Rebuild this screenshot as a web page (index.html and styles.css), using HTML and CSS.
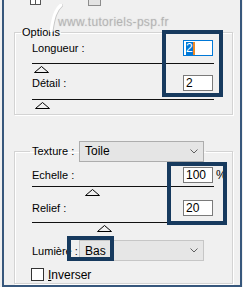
FILE: index.html
```html
<!DOCTYPE html>
<html lang="fr">
<head>
  <meta charset="UTF-8">
  <title>Options</title>
  <link rel="stylesheet" href="styles.css">
</head>
<body>

  <div class="window">
    <!-- reste de la barre du haut -->
    <div class="top">
      <span class="mini mini-a"></span>
      <span class="mini mini-b"></span>
    </div>

    <!-- Options -->
    <fieldset class="group options">
      <legend>Options</legend>
      <div class="row">
        <span class="label">Longueur :</span>
        <span class="num focus"><span class="sel">2</span><span class="caret"></span></span>
        <span class="unit"></span>
      </div>
      <div class="slider">
        <svg class="thumb" style="margin-left:2px" width="15" height="7" viewBox="0 0 15 7"><polygon points="0.5,6.5 7.5,0.5 14.5,6.5"/></svg>
      </div>
      <div class="row second">
        <span class="label">Détail :</span>
        <span class="num">2</span>
        <span class="unit"></span>
      </div>
      <div class="slider last">
        <svg class="thumb" style="margin-left:3px" width="15" height="7" viewBox="0 0 15 7"><polygon points="0.5,6.5 7.5,0.5 14.5,6.5"/></svg>
      </div>
    </fieldset>

    <!-- Texture -->
    <fieldset class="group texture">
      <legend>
        <span class="legend-label">Texture :</span><span class="combo">Toile<svg class="chevron" width="8" height="5" viewBox="0 0 8 5"><polyline points="0.5,0.5 4,4 7.5,0.5"/></svg></span>
      </legend>
      <div class="row echelle">
        <span class="label">Echelle :</span>
        <span class="num">100</span>
        <span class="unit">%</span>
      </div>
      <div class="slider">
        <svg class="thumb" style="margin-left:53px" width="15" height="7" viewBox="0 0 15 7"><polygon points="0.5,6.5 7.5,0.5 14.5,6.5"/></svg>
      </div>
      <div class="row relief">
        <span class="label">Relief :</span>
        <span class="num">20</span>
        <span class="unit"></span>
      </div>
      <div class="slider">
        <svg class="thumb" style="margin-left:65px" width="15" height="7" viewBox="0 0 15 7"><polygon points="0.5,6.5 7.5,0.5 14.5,6.5"/></svg>
      </div>
      <div class="combo-row">
        <span class="legend-label wide">Lumière :</span><span class="combo off">Bas<svg class="chevron" width="8" height="5" viewBox="0 0 8 5"><polyline points="0.5,0.5 4,4 7.5,0.5"/></svg></span>
      </div>
      <label class="check">
        <span class="box"></span><span><u>I</u>nverser</span>
      </label>
    </fieldset>

    <!-- filigrane + cadres de repérage -->
    <span class="watermark">www.tutoriels-psp.fr</span>
    <svg class="brush" width="14" height="28" viewBox="0 0 14 28"><path d="M12 1 C 6 6, 4 14, 2 27"/></svg>
    <span class="hl hl-1"></span>
    <span class="hl hl-2"></span>
    <span class="hl hl-3"></span>
  </div>

</body>
</html>
```

FILE: styles.css
```css
* {
  margin: 0;
  padding: 0;
  box-sizing: border-box;
}
html, body {
  background: #f0f0f0;
  font-family: 'Liberation Sans', Arial, sans-serif;
  font-size: 11px;
  color: #000;
}

.window {
  position: relative;
  width: 240px;
  height: 287px;
  margin-left: 2px;
  border: 2px solid #37577c;
  border-top: none;
  overflow: hidden;
}

.top {
  display: flex;
  height: 26px;
}
.mini {
  display: block;
  margin-top: -7px;
}
.mini-a {
  margin-left: 26px;
  width: 11px;
  height: 12px;
  border: 1px solid #555;
  background: linear-gradient(#555, #555) center / 1px 100% no-repeat, #fff;
}
.mini-b {
  margin-left: 47px;
  width: 13px;
  height: 13px;
  border: 1px solid #8c8c8c;
  background: #e3e3e3;
}

.group {
  margin: 0 7px 0 10px;
  border: 1px solid #d3d3d3;
  box-shadow: inset 1px 1px 0 #fff, 1px 1px 0 #fff;
  min-width: 0;
}
.group legend {
  line-height: 13px;
  padding: 0 1px;
  margin-left: 6px;
}

.row {
  display: flex;
  align-items: center;
  height: 16px;
  margin-top: 1px;
  padding-left: 17px;
}
.row.second { margin-top: 2px; }
.row.echelle { margin-top: 5px; }
.row.relief { margin-top: 4px; }
.label {
  flex: 1;
}
.num {
  width: 30px;
  height: 16px;
  padding: 0 2px;
  line-height: 14px;
  font-size: 12px;
  background: #fff;
  border: 1px solid #7a7a7a;
  display: flex;
  align-items: center;
}
.num.focus {
  border-color: #0078d7;
}
.sel {
  background: #0078d7;
  color: #fff;
  line-height: 13px;
}
.caret {
  width: 2px;
  height: 13px;
  background: #f08a24;
}
.unit {
  width: 19px;
  padding-left: 3px;
  font-size: 12px;
}

.slider {
  margin: 7px 0 0 17px;
  width: 182px;
  border-top: 1px solid #111;
  padding-top: 2px;
}
.slider.last { margin-top: 8px; }
.row.echelle + .slider { margin-top: 3px; }
.row.relief + .slider { margin-top: 6px; }
.thumb {
  display: block;
}
.thumb polygon {
  fill: none;
  stroke: #000;
  stroke-width: 1;
}

.options {
  padding-bottom: 5px;
}

.texture {
  margin-top: 26px;
  padding-bottom: 2px;
}
.texture legend {
  margin-left: 15px;
  padding: 0 2px;
  line-height: 21px;
  display: flex;
  align-items: center;
}
.legend-label {
  display: inline-block;
  width: 45px;
}
.legend-label.wide {
  width: 47px;
}
.combo {
  position: relative;
  display: inline-flex;
  align-items: center;
  width: 125px;
  height: 21px;
  margin-left: 2px;
  padding-left: 5px;
  font-size: 12px;
  background: #e5e5e5;
  border: 1px solid #adadad;
}
.combo.off {
  margin-left: 0;
  background: #e6e6e6;
  border-color: #c6c6c6;
}
.chevron {
  margin-left: auto;
  margin-right: 5px;
}
.chevron polyline {
  fill: none;
  stroke: #606060;
  stroke-width: 1;
}

.combo-row {
  display: flex;
  align-items: center;
  height: 21px;
  margin-top: 8px;
  padding-left: 17px;
}

.check {
  display: flex;
  align-items: center;
  gap: 4px;
  height: 13px;
  margin-top: 7px;
  padding-left: 16px;
  font-size: 12px;
}
.check .box {
  width: 13px;
  height: 13px;
  border: 1px solid #333;
  background: #fff;
}

.watermark {
  position: absolute;
  left: 54px;
  top: 15px;
  font-size: 12px;
  letter-spacing: 0.3px;
  color: rgba(150, 150, 150, 0.45);
  text-shadow: 0 0 1px rgba(150, 150, 150, 0.5);
}
.brush {
  position: absolute;
  left: 45px;
  top: 4px;
}
.brush path {
  fill: none;
  stroke: #fff;
  stroke-width: 3;
  stroke-linecap: round;
  filter: drop-shadow(1px 0 0 #c8c8c8);
}

.hl {
  position: absolute;
  border: 4px solid #173a5e;
}
.hl-1 {
  left: 158px;
  top: 30px;
  width: 61px;
  height: 67px;
}
.hl-2 {
  left: 163px;
  top: 162px;
  width: 60px;
  height: 63px;
}
.hl-3 {
  left: 63px;
  top: 236px;
  width: 47px;
  height: 25px;
}
```
